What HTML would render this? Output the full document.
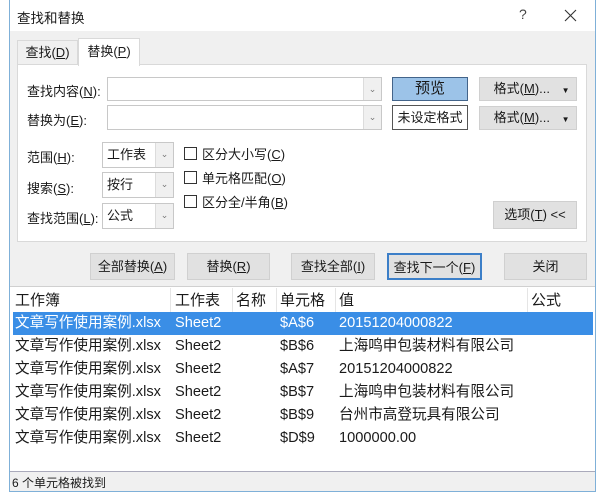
<!DOCTYPE html>
<html><head><meta charset="utf-8"><style>
*{margin:0;padding:0;box-sizing:border-box}
body{width:600px;height:500px;background:#fff;font-family:"Liberation Sans","Noto Sans CJK SC",sans-serif;position:relative;overflow:hidden;color:#1a1a1a}
.a{position:absolute;white-space:nowrap}
.dlg{left:9px;top:0;width:587px;height:492px;background:#f0f0f0;border:1px solid #7fb0d8;border-top:none}
.combo{background:#fff;border:1px solid #c8c8c8}
.arr{position:absolute;right:0;top:0;bottom:0;width:18px;background:#f0f0f0;border-left:1px solid #dcdcdc;font-size:9px;color:#777;text-align:center}
.btn{background:#e1e1e1;border:1px solid #adadad;text-align:center;font-size:13px}
.cb{width:13px;height:13px;border:1px solid #333;background:#fff}
.t13{font-size:13px}
.row{position:absolute;left:11px;width:582px;height:23px;font-size:14.6px;line-height:23px}
.row span{position:absolute}
</style></head><body>
<div class="a dlg"></div>
<div class="a" style="left:10px;top:0;width:585px;height:31px;background:#fff"></div>
<div class="a" style="left:17px;top:7px;font-size:13.5px">查找和替换</div>
<div class="a" style="left:519px;top:6px;font-size:14px;color:#444">?</div>
<svg class="a" style="left:564px;top:9px" width="13" height="13"><path d="M1 1L12 12M12 1L1 12" stroke="#333" stroke-width="1.1"/></svg>
<!-- tabs -->
<div class="a t13" style="left:17px;top:40px;width:61px;height:25px;border:1px solid #d9d9d9;border-bottom:none;line-height:24px;text-align:center;background:#f0f0f0">查找(<u>D</u>)</div>
<div class="a" style="left:17px;top:64px;width:570px;height:178px;background:#fff;border:1px solid #d9d9d9"></div>
<div class="a t13" style="left:78px;top:38px;width:62px;height:28px;border:1px solid #d9d9d9;border-bottom:none;line-height:26px;text-align:center;background:#fff">替换(<u>P</u>)</div>
<div class="a t13" style="left:27px;top:81px">查找内容(<u>N</u>):</div>
<div class="a t13" style="left:27px;top:110px">替换为(<u>E</u>):</div>
<div class="a combo" style="left:107px;top:77px;width:275px;height:24px"><div class="arr" style="line-height:22px">⌄</div></div>
<div class="a combo" style="left:107px;top:105px;width:275px;height:25px"><div class="arr" style="line-height:22px">⌄</div></div>
<div class="a" style="left:392px;top:77px;width:76px;height:24px;background:#9cc3e8;border:1px solid #43648a;text-align:center;font-size:15px;line-height:22px">预览</div>
<div class="a" style="left:392px;top:105px;width:76px;height:25px;background:#fff;border:1px solid #555;text-align:center;font-size:13px;line-height:23px">未设定格式</div>
<div class="a btn" style="left:479px;top:77px;width:98px;height:24px;line-height:22px;border-color:#d0d0d0">&nbsp;&nbsp;格式(<u>M</u>)... <span style="font-size:8px;margin-left:8px">▼</span></div>
<div class="a btn" style="left:479px;top:106px;width:98px;height:24px;line-height:22px;border-color:#d0d0d0">&nbsp;&nbsp;格式(<u>M</u>)... <span style="font-size:8px;margin-left:8px">▼</span></div>
<div class="a t13" style="left:27px;top:147px">范围(<u>H</u>):</div>
<div class="a t13" style="left:27px;top:178px">搜索(<u>S</u>):</div>
<div class="a t13" style="left:27px;top:208px">查找范围(<u>L</u>):</div>
<div class="a combo" style="left:102px;top:142px;width:72px;height:26px;font-size:13px;line-height:24px;padding-left:4px">工作表<div class="arr" style="line-height:22px">⌄</div></div>
<div class="a combo" style="left:102px;top:172px;width:72px;height:26px;font-size:13px;line-height:24px;padding-left:4px">按行<div class="arr" style="line-height:22px">⌄</div></div>
<div class="a combo" style="left:102px;top:203px;width:72px;height:26px;font-size:13px;line-height:24px;padding-left:4px">公式<div class="arr" style="line-height:22px">⌄</div></div>
<div class="a cb" style="left:184px;top:147px"></div><div class="a t13" style="left:202px;top:144px">区分大小写(<u>C</u>)</div>
<div class="a cb" style="left:184px;top:171px"></div><div class="a t13" style="left:202px;top:168px">单元格匹配(<u>O</u>)</div>
<div class="a cb" style="left:184px;top:195px"></div><div class="a t13" style="left:202px;top:192px">区分全/半角(<u>B</u>)</div>
<div class="a btn" style="left:493px;top:201px;width:84px;height:28px;line-height:26px;border-color:#cfcfcf">选项(<u>T</u>) &lt;&lt;</div>
<!-- buttons -->
<div class="a btn" style="left:90px;top:253px;width:85px;height:27px;line-height:25px;border-color:#d0d0d0">全部替换(<u>A</u>)</div>
<div class="a btn" style="left:187px;top:253px;width:83px;height:27px;line-height:25px;border-color:#d0d0d0">替换(<u>R</u>)</div>
<div class="a btn" style="left:291px;top:253px;width:84px;height:27px;line-height:25px;border-color:#d0d0d0">查找全部(<u>I</u>)</div>
<div class="a btn" style="left:387px;top:253px;width:95px;height:27px;line-height:25px;border:2px solid #3c7fc8">查找下一个(<u>F</u>)</div>
<div class="a btn" style="left:504px;top:253px;width:83px;height:27px;line-height:25px;border-color:#d0d0d0">关闭</div>
<!-- list -->
<div class="a" style="left:10px;top:286px;width:585px;height:186px;background:#fff;border-top:1px solid #d0d0d0;border-bottom:1px solid #aab"></div>
<div class="row" style="top:289px;font-size:15px">
<span style="left:4px">工作簿</span><span style="left:164px">工作表</span><span style="left:225px">名称</span><span style="left:269px">单元格</span><span style="left:328px">值</span><span style="left:520px">公式</span></div>
<div class="a" style="left:170px;top:288px;width:1px;height:24px;background:#e5e5e5"></div>
<div class="a" style="left:232px;top:288px;width:1px;height:24px;background:#e5e5e5"></div>
<div class="a" style="left:276px;top:288px;width:1px;height:24px;background:#e5e5e5"></div>
<div class="a" style="left:335px;top:288px;width:1px;height:24px;background:#e5e5e5"></div>
<div class="a" style="left:527px;top:288px;width:1px;height:24px;background:#e5e5e5"></div>
<div class="row" style="top:312px;background:#3a8ee6;color:#fff;left:13px;width:580px"><span style="left:2px">文章写作使用案例.xlsx</span><span style="left:162px">Sheet2</span><span style="left:267px">$A$6</span><span style="left:326px">20151204000822</span></div>
<div class="row" style="top:335px"><span style="left:4px">文章写作使用案例.xlsx</span><span style="left:164px">Sheet2</span><span style="left:269px">$B$6</span><span style="left:328px">上海鸣申包装材料有限公司</span></div>
<div class="row" style="top:358px"><span style="left:4px">文章写作使用案例.xlsx</span><span style="left:164px">Sheet2</span><span style="left:269px">$A$7</span><span style="left:328px">20151204000822</span></div>
<div class="row" style="top:381px"><span style="left:4px">文章写作使用案例.xlsx</span><span style="left:164px">Sheet2</span><span style="left:269px">$B$7</span><span style="left:328px">上海鸣申包装材料有限公司</span></div>
<div class="row" style="top:404px"><span style="left:4px">文章写作使用案例.xlsx</span><span style="left:164px">Sheet2</span><span style="left:269px">$B$9</span><span style="left:328px">台州市高登玩具有限公司</span></div>
<div class="row" style="top:427px"><span style="left:4px">文章写作使用案例.xlsx</span><span style="left:164px">Sheet2</span><span style="left:269px">$D$9</span><span style="left:328px">1000000.00</span></div>
<div class="a" style="left:12px;top:474px;font-size:12px">6 个单元格被找到</div>
</body></html>
